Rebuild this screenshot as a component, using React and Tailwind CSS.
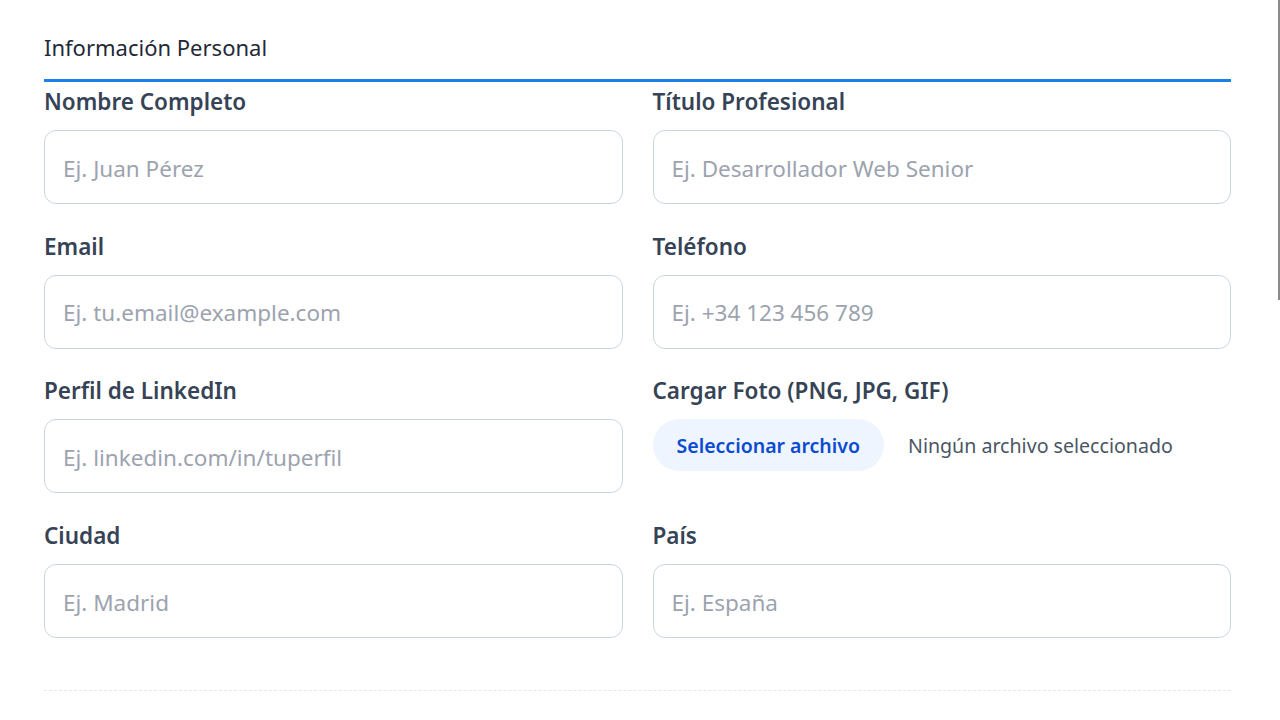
import React from 'react'

const fields = [
  { label: 'Nombre Completo', placeholder: 'Ej. Juan Pérez' },
  { label: 'Título Profesional', placeholder: 'Ej. Desarrollador Web Senior' },
  { label: 'Email', placeholder: 'Ej. tu.email@example.com' },
  { label: 'Teléfono', placeholder: 'Ej. +34 123 456 789' },
  { label: 'Perfil de LinkedIn', placeholder: 'Ej. linkedin.com/in/tuperfil' },
  { label: 'Cargar Foto (PNG, JPG, GIF)', file: true },
  { label: 'Ciudad', placeholder: 'Ej. Madrid' },
  { label: 'País', placeholder: 'Ej. España' },
]

function Field({ label, placeholder, file }) {
  return (
    <div className="flex flex-col">
      <label className="mb-[13px] text-[22.5px] font-semibold leading-[30px] text-[#364356]">{label}</label>
      {file ? (
        <div className="flex items-center">
          <button
            type="button"
            className="mr-[24px] h-[52px] rounded-full bg-[#eef5ff] px-6 text-[19.5px] font-semibold text-[#0b4bd1]"
          >
            Seleccionar archivo
          </button>
          <span className="text-[19.6px] text-[#4b5563]">Ningún archivo seleccionado</span>
        </div>
      ) : (
        <input
          type="text"
          placeholder={placeholder}
          className="h-[74px] w-full rounded-xl border border-[#cbd5e1] bg-white px-[18px] pt-[2px] text-[22.5px] text-[#1f2937] outline-none placeholder:text-[#9ca3af]"
        />
      )}
    </div>
  )
}

export default function App() {
  return (
    <div
      className="relative min-h-screen bg-white px-[44px] pt-[31px]"
      style={{ fontFamily: '"Noto Sans", "Open Sans", sans-serif' }}
    >
      <div className="w-[1187px]">
        <h2 className="border-b-[3px] border-[#1a7fe6] pb-4 text-[22px] leading-8 text-[#1f2937]">
          Información Personal
        </h2>
        <div className="grid grid-cols-2 gap-x-[30px] gap-y-[27.7px] pt-[5px]">
          {fields.map((f) => (
            <Field key={f.label} {...f} />
          ))}
        </div>
        <div className="mt-[52px] border-t border-dashed border-[#e5e7eb]" />
      </div>
      <div className="absolute right-0 top-0 h-[300px] w-[2px] bg-[#8a8a8a]" />
    </div>
  )
}
